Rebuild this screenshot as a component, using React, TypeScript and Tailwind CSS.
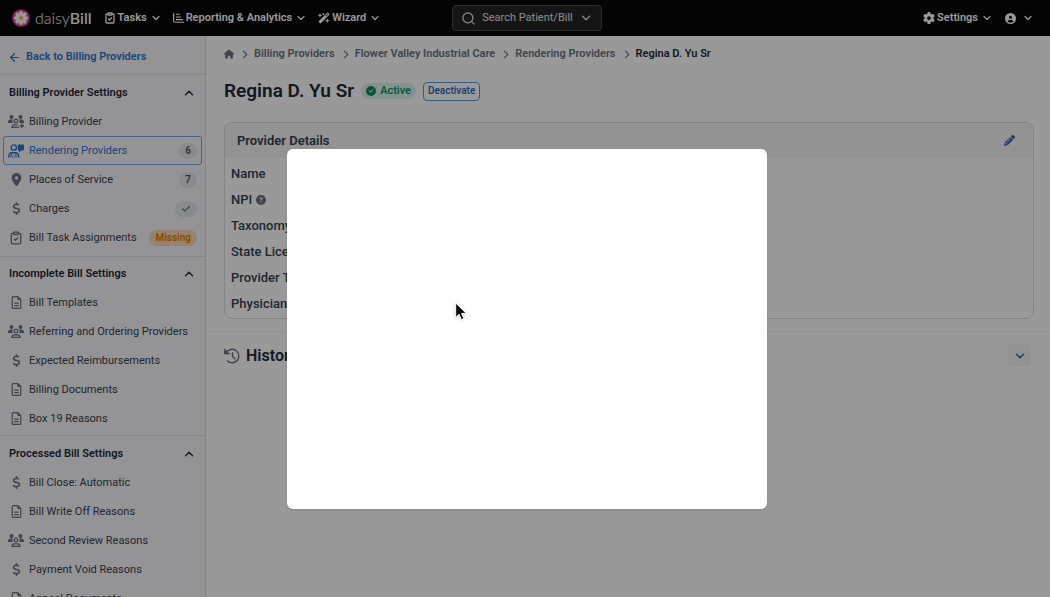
import type { ComponentType, ReactNode } from 'react';
import clsx from 'clsx';
import {
  FaChevronRight,
  FaCircleCheck,
  FaCircleQuestion,
  FaCircleUser,
  FaDollarSign,
  FaGear,
  FaHouse,
  FaLocationDot,
  FaPencil,
  FaRegFileLines,
  FaWandMagicSparkles,
} from 'react-icons/fa6';
import { ArrowLeft, Check, ChevronDown, ChevronUp, ClipboardCheck, Search } from 'lucide-react';

type IconType = ComponentType<{ className?: string }>;

type NavItem = {
  label: string;
  icon: IconType;
  active?: boolean;
  badge?: ReactNode;
  badgeClass?: string;
};

const DollarIcon: IconType = () => <FaDollarSign className="size-[13px]" />;
const FileIcon: IconType = () => <FaRegFileLines className="size-[13px]" />;
const PinIcon: IconType = () => <FaLocationDot className="size-[13px]" />;
const TaskIcon: IconType = () => <ClipboardCheck className="size-[14px]" strokeWidth={2.2} />;

function PeopleIcon({ plus }: { plus?: boolean }) {
  return (
    <svg viewBox="0 0 32 26" className="w-4 h-[13px]" fill="none" stroke="currentColor" strokeWidth="2.6">
      <circle cx="7" cy="4" r="4" fill="currentColor" stroke="none" />
      <circle cx="25" cy="4" r="4" fill="currentColor" stroke="none" />
      <path d="M0 16v-1.500C0 11 2 9 5.500 9H10c-1.500 2.500-1.500 5 0 7zM32 16v-1.500c0-3.500-2-5.500-5.500-5.500H22c1.500 2.500 1.500 5 0 7z" fill="currentColor" stroke="none" />
      <circle cx="16" cy="12" r="3.600" />
      <path d={plus ? 'M22 24.600H8c0-3.300 2-5 5-5h6' : 'M8 24.600c0-3.300 2-5 5-5h6c3 0 5 1.700 5 5z'} />
      {plus && <path d="M27.500 17v9M23 21.500h9" />}
    </svg>
  );
}

const GroupIcon: IconType = () => <PeopleIcon />;
const GroupPlusIcon: IconType = () => <PeopleIcon plus />;

function DoctorIcon() {
  return (
    <svg viewBox="0 0 32 28" className="w-4 h-[14px]" fill="none" stroke="currentColor" strokeWidth="2.800">
      <circle cx="11.500" cy="7" r="5.300" />
      <path d="M1.500 27c0-6 3-9.500 7-9.500h6c4 0 7 3.500 7 9.500" />
      <path d="M7.500 17.500v4M15.500 17.500v4M5.500 27v-2a2 2 0 0 1 4 0v2M13.500 27v-2a2 2 0 0 1 4 0v2" strokeWidth="2" />
      <path d="M21 1h9a2 2 0 0 1 2 2v8a2 2 0 0 1-2 2h-4l-4 4v-4h-1a2 2 0 0 1-1.500-2V3A2 2 0 0 1 21 1z" fill="currentColor" stroke="none" />
    </svg>
  );
}

function HistoryIcon() {
  return (
    <svg viewBox="0 0 32 32" className="size-4 text-gray-500" fill="none" stroke="currentColor" strokeWidth="2.800" strokeLinecap="round">
      <path d="M4.500 9.500A13.500 13.500 0 1 1 7 26" />
      <path d="M17 9.500V17l4.500 4.500" />
      <path d="M1 2.500v9.500h9.500z" fill="currentColor" strokeWidth="1.500" strokeLinejoin="round" />
    </svg>
  );
}

function ReportIcon() {
  return (
    <svg viewBox="0 0 22 20" className="w-[11px] h-[10px]" fill="none" stroke="currentColor" strokeWidth="2.400">
      <path d="M1.200 0v15.500a3 3 0 0 0 3 3H22M6 2.500h8M6 8h10M6 13.200h14" />
    </svg>
  );
}

const PETALS = [0, 45, 90, 135, 180, 225, 270, 315];

function DaisyLogo() {
  return (
    <svg viewBox="0 0 36 36" className="size-[18px]">
      <circle cx="18" cy="18" r="17.500" fill="#e83e9c" />
      {PETALS.map(deg => (
        <ellipse key={deg} cx="18" cy="10" rx="4" ry="6" fill="#fff" stroke="#f3b6d6" strokeWidth=".6" transform={`rotate(${deg} 18 18)`} />
      ))}
      <circle cx="18" cy="18" r="4" fill="#f5c82e" />
    </svg>
  );
}

const SECTIONS: { label: string; pad: string; items: NavItem[] }[] = [
  {
    label: 'Billing Provider Settings',
    pad: 'pt-[3px] pb-1',
    items: [
      { label: 'Billing Provider', icon: GroupPlusIcon },
      { label: 'Rendering Providers', icon: DoctorIcon, active: true, badge: '6' },
      { label: 'Places of Service', icon: PinIcon, badge: '7' },
      { label: 'Charges', icon: DollarIcon, badge: <Check className="size-[10px] text-gray-500" strokeWidth={3} /> },
      { label: 'Bill Task Assignments', icon: TaskIcon, badge: 'Missing', badgeClass: 'bg-[#fcd9b6] text-[#e87a00]' },
    ],
  },
  {
    label: 'Incomplete Bill Settings',
    pad: 'py-0.5',
    items: [
      { label: 'Bill Templates', icon: FileIcon },
      { label: 'Referring and Ordering Providers', icon: GroupIcon },
      { label: 'Expected Reimbursements', icon: DollarIcon },
      { label: 'Billing Documents', icon: FileIcon },
      { label: 'Box 19 Reasons', icon: FileIcon },
    ],
  },
  {
    label: 'Processed Bill Settings',
    pad: 'pt-[3px] pb-1',
    items: [
      { label: 'Bill Close: Automatic', icon: DollarIcon },
      { label: 'Bill Write Off Reasons', icon: FileIcon },
      { label: 'Second Review Reasons', icon: GroupIcon },
      { label: 'Payment Void Reasons', icon: DollarIcon },
      { label: 'Appeal Documents', icon: FileIcon },
    ],
  },
];

const CRUMBS = ['Billing Providers', 'Flower Valley Industrial Care', 'Rendering Providers'];

const DETAILS = ['Name', 'NPI', 'Taxonomy Code', 'State License Number', 'Provider Type', 'Physician Signature'];

function MenuButton({ icon, label }: { icon: ReactNode; label: string }) {
  return (
    <button className="flex items-center gap-0.5 font-semibold">
      {icon}
      {label}
      <ChevronDown className="size-3 ml-px" strokeWidth={2.4} />
    </button>
  );
}

function TopBar() {
  return (
    <header className="grid grid-cols-[1fr_auto_1fr] items-center h-9 pl-3 pr-2 bg-[#080808] text-white">
      <div className="flex items-center gap-3">
        <a href="#" className="flex items-center gap-[5px] text-[16px] leading-5 font-[Lato,sans-serif]">
          <DaisyLogo />
          <span>
            <span className="font-light">daisy</span>
            <span className="font-medium">Bill</span>
          </span>
        </a>
        <nav className="flex items-center gap-[11px]">
          <MenuButton icon={<ClipboardCheck className="size-3" strokeWidth={2.6} />} label="Tasks" />
          <MenuButton icon={<ReportIcon />} label="Reporting & Analytics" />
          <MenuButton icon={<FaWandMagicSparkles className="size-3" />} label="Wizard" />
        </nav>
      </div>
      <button className="flex items-center h-[26px] px-2 rounded border border-[#4a4a4a] bg-[#242424] text-gray-200">
        <Search className="size-[15px] mr-1.5" strokeWidth={2} />
        Search Patient/Bill
        <ChevronDown className="size-[14px] ml-1.5" strokeWidth={2.2} />
      </button>
      <div className="flex items-center justify-end gap-3 pr-2">
        <MenuButton icon={<FaGear className="size-3" />} label="Settings" />
        <button className="flex items-center gap-1.5" aria-label="Account">
          <FaCircleUser className="size-[11px]" />
          <ChevronDown className="size-3" strokeWidth={2.4} />
        </button>
      </div>
    </header>
  );
}

function Sidebar() {
  return (
    <aside className="w-[206px] shrink-0 overflow-hidden bg-[#f7f7fa] border-r border-[#dfdfe3] text-gray-700">
      <a href="#" className="flex items-center gap-[5px] h-[38px] pl-2 pt-1 font-semibold text-[#2b74cc]">
        <ArrowLeft className="size-[13px]" strokeWidth={2.2} />
        Back to Billing Providers
      </a>
      {SECTIONS.map(({ label, pad, items }) => (
        <section key={label} className={clsx('border-t border-[#dfdfe3] px-[3px]', pad)}>
          <button className="flex items-center justify-between w-full h-[29px] pl-1.5 pr-1.5 font-semibold text-gray-800">
            {label}
            <ChevronUp className="size-[14px]" strokeWidth={2.2} />
          </button>
          {items.map(({ label: text, icon: Icon, active, badge, badgeClass }) => (
            <a
              key={text}
              href="#"
              className={clsx(
                'flex items-center h-[29px] pl-1 pr-1 rounded-[3px] border whitespace-nowrap',
                active ? 'border-[#76a9ea] text-[#2b74cc]' : 'border-transparent',
              )}
            >
              <span className={clsx('flex justify-center w-4 mr-[5px]', !active && 'text-gray-500')}>
                <Icon />
              </span>
              {text}
              {badge && (
                <span
                  className={clsx(
                    'flex items-center h-4 px-1.5 ml-auto rounded-full text-[10px] font-semibold',
                    badgeClass ?? 'bg-gray-200 text-gray-600',
                  )}
                >
                  {badge}
                </span>
              )}
            </a>
          ))}
        </section>
      ))}
    </aside>
  );
}

function Details() {
  return (
    <section className="ml-[18px] mr-4 rounded-lg border border-[#dcdce0] overflow-hidden">
      <div className="flex items-center justify-between h-[35px] pl-3 pr-[18px] bg-[#f5f5f5]">
        <h2 className="text-[13px] font-semibold text-gray-700">Provider Details</h2>
        <button aria-label="Edit provider details" className="text-[#2563ba]">
          <FaPencil className="size-[11px]" />
        </button>
      </div>
      <dl className="px-1.5 pt-[3px] pb-px text-[13px] font-medium text-gray-700">
        {DETAILS.map(name => (
          <dt key={name} className="flex items-center gap-1 h-[26px]">
            {name}
            {name === 'NPI' && <FaCircleQuestion className="size-[10px] text-gray-500" />}
          </dt>
        ))}
      </dl>
    </section>
  );
}

export default function App() {
  return (
    <div className="flex flex-col h-screen overflow-hidden bg-white font-[Roboto,sans-serif] text-[11px] leading-4">
      <TopBar />
      <div className="flex flex-1 min-h-0">
        <Sidebar />
        <main className="flex-1 min-w-0">
          <nav className="flex items-center gap-1.5 h-9 px-[18px] font-semibold text-gray-500">
            <a href="#" aria-label="Home">
              <FaHouse className="size-[10px]" />
            </a>
            {CRUMBS.map(crumb => (
              <span key={crumb} className="flex items-center gap-[5px]">
                <FaChevronRight className="size-[9px]" />
                <a href="#">{crumb}</a>
              </span>
            ))}
            <span className="flex items-center gap-[5px]">
              <FaChevronRight className="size-[9px]" />
              <span className="text-gray-800">Regina D. Yu Sr</span>
            </span>
          </nav>

          <div className="flex items-center gap-[7px] h-[38px] mb-3 px-[18px]">
            <h1 className="text-[19px] leading-6 font-semibold text-gray-800">Regina D. Yu Sr</h1>
            <span className="flex items-center gap-1 h-4 px-[5px] rounded-full bg-[#d8f5ea] text-[#0d8a60] font-medium">
              <FaCircleCheck className="size-[10px]" />
              Active
            </span>
            <button className="h-[19px] px-1 rounded border border-[#5a94dc] text-[10px] leading-4 font-medium text-[#2563ba]">
              Deactivate
            </button>
          </div>

          <Details />

          <div className="flex items-center justify-between h-12 mt-3 pl-[18px] pr-[19px] border-t border-[#f0f0f2]">
            <h2 className="flex items-center gap-1.5 text-[16px] font-semibold text-gray-800">
              <HistoryIcon />
              History
            </h2>
            <button aria-label="Show history" className="flex items-center justify-center size-[23px] rounded bg-[#f5f5f5] text-[#2563ba]">
              <ChevronDown className="size-[14px]" strokeWidth={2.6} />
            </button>
          </div>
        </main>
      </div>

      {/* Modal, still empty while its content loads */}
      <div className="fixed inset-0 flex items-start justify-center pt-[149px] pl-[3px] bg-black/40">
        <div role="dialog" aria-modal="true" aria-label="Loading" className="w-[480px] h-[360px] rounded-md bg-white shadow-sm" />
      </div>

      <svg viewBox="0 0 12 19" className="fixed left-[455px] top-[302px] w-3 h-[19px] drop-shadow-sm">
        <path d="M.7 1v14.500l3.400-3.200 2.200 5.300 2.500-1-2.200-5.200h4.700z" fill="#000" stroke="#fff" strokeWidth="1" />
      </svg>
    </div>
  );
}
